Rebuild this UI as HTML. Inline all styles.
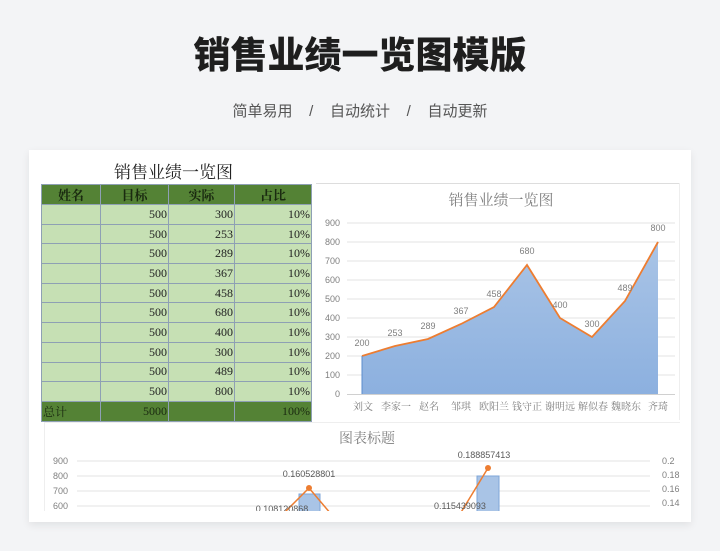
<!DOCTYPE html>
<html><head><meta charset="utf-8">
<style>
html,body{margin:0;padding:0;}
body{width:720px;height:551px;background:#f3f4f6;position:relative;overflow:hidden;font-family:"Liberation Sans","Noto Sans CJK SC",sans-serif;}
.t{position:absolute;left:0;width:720px;text-align:center;}
h1{position:absolute;top:29px;left:0;width:720px;margin:0;text-align:center;font-size:37px;font-weight:900;color:#1e1e1e;letter-spacing:0px;line-height:54px;}
.sub{top:101px;font-size:15px;color:#555;line-height:22px;}
.card{position:absolute;left:29px;top:150px;width:662px;height:372px;background:#fff;box-shadow:0 3px 8px rgba(0,0,0,0.08);overflow:hidden;}
table{position:absolute;left:12px;top:34px;border-collapse:collapse;font-family:"Liberation Serif","Noto Serif CJK SC",serif;font-size:12px;table-layout:fixed;width:270px;}
td{border:1px solid #8ea0b4;height:18.7px;padding:0 1px;background:#c6e0b4;text-align:right;color:#222;}
tr.h td{background:#548235;text-align:center;font-weight:bold;color:#1a2a10;font-size:13px;}
tr.f td{background:#548235;color:#1a2a10;}
.ttl{position:absolute;left:85px;top:8px;font-family:"Liberation Serif","Noto Serif CJK SC",serif;font-size:17px;color:#222;}
</style></head><body>
<h1>销售业绩一览图模版</h1>
<div class="t sub">简单易用&nbsp;&nbsp;&nbsp;&nbsp;/&nbsp;&nbsp;&nbsp;&nbsp;自动统计&nbsp;&nbsp;&nbsp;&nbsp;/&nbsp;&nbsp;&nbsp;&nbsp;自动更新</div>
<div class="card">
<div class="ttl">销售业绩一览图</div>
<table>
<colgroup><col style="width:59px"><col style="width:68px"><col style="width:66px"><col style="width:77px"></colgroup>
<tr class="h"><td>姓名</td><td>目标</td><td>实际</td><td>占比</td></tr>
<tr><td></td><td>500</td><td>300</td><td>10%</td></tr>
<tr><td></td><td>500</td><td>253</td><td>10%</td></tr>
<tr><td></td><td>500</td><td>289</td><td>10%</td></tr>
<tr><td></td><td>500</td><td>367</td><td>10%</td></tr>
<tr><td></td><td>500</td><td>458</td><td>10%</td></tr>
<tr><td></td><td>500</td><td>680</td><td>10%</td></tr>
<tr><td></td><td>500</td><td>400</td><td>10%</td></tr>
<tr><td></td><td>500</td><td>300</td><td>10%</td></tr>
<tr><td></td><td>500</td><td>489</td><td>10%</td></tr>
<tr><td></td><td>500</td><td>800</td><td>10%</td></tr>
<tr class="f"><td style="text-align:left">总计</td><td>5000</td><td></td><td>100%</td></tr>
</table>
<svg style="position:absolute;left:0;top:0" width="662" height="372" viewBox="29 150 662 372" font-family="Liberation Sans, Noto Sans CJK SC, sans-serif">
<defs><linearGradient id="g" x1="0" y1="0" x2="0" y2="1"><stop offset="0" stop-color="#a9c4e6"/><stop offset="1" stop-color="#8cb0df"/></linearGradient></defs>
<line x1="316" y1="183.5" x2="679" y2="183.5" stroke="#ddd"/>
<line x1="679.5" y1="183" x2="679.5" y2="420" stroke="#eee"/>
<text x="501" y="205" font-size="15" fill="#7f7f7f" text-anchor="middle" font-family="Liberation Serif, Noto Serif CJK SC, serif">销售业绩一览图</text>
<g stroke="#e3e3e3">
<line x1="347" y1="223" x2="675" y2="223"/><line x1="347" y1="242" x2="675" y2="242"/><line x1="347" y1="261" x2="675" y2="261"/><line x1="347" y1="280" x2="675" y2="280"/><line x1="347" y1="299" x2="675" y2="299"/><line x1="347" y1="318" x2="675" y2="318"/><line x1="347" y1="337" x2="675" y2="337"/><line x1="347" y1="356" x2="675" y2="356"/><line x1="347" y1="375" x2="675" y2="375"/>
</g>
<line x1="347" y1="394.5" x2="675" y2="394.5" stroke="#d0d0d0"/>
<g font-size="9" fill="#7f7f7f" text-anchor="end">
<text x="340" y="226">900</text><text x="340" y="245">800</text><text x="340" y="264">700</text><text x="340" y="283">600</text><text x="340" y="302">500</text><text x="340" y="321">400</text><text x="340" y="340">300</text><text x="340" y="359">200</text><text x="340" y="378">100</text><text x="340" y="397">0</text>
</g>
<polygon points="362,356 395,346 428,339 461,324 494,307 527,265 560,318 592,337 625,301 658,242 658,394 362,394" fill="url(#g)"/>
<polyline points="362,356 395,346 428,339 461,324 494,307 527,265 560,318 592,337 625,301 658,242" fill="none" stroke="#ed7d31" stroke-width="1.8"/>
<line x1="362" y1="356" x2="362" y2="394" stroke="#5b8ccc"/>
<g font-size="9" fill="#7f7f7f" text-anchor="middle">
<text x="362" y="346">200</text><text x="395" y="336">253</text><text x="428" y="329">289</text><text x="461" y="314">367</text><text x="494" y="297">458</text><text x="527" y="254">680</text><text x="560" y="308">400</text><text x="592" y="327">300</text><text x="625" y="291">489</text><text x="658" y="231">800</text>
</g>
<g font-size="10" fill="#7f7f7f" text-anchor="middle" font-family="Liberation Serif, Noto Serif CJK SC, serif">
<text x="363" y="410">刘文</text><text x="396" y="410">李家一</text><text x="429" y="410">赵名</text><text x="461" y="410">邹琪</text><text x="494" y="410">欧阳兰</text><text x="527" y="410">钱守正</text><text x="560" y="410">谢明远</text><text x="593" y="410">解似春</text><text x="626" y="410">魏晓东</text><text x="658" y="410">齐琦</text>
</g>
<line x1="44" y1="422.5" x2="680" y2="422.5" stroke="#eee"/>
<line x1="44.5" y1="422" x2="44.5" y2="522" stroke="#eee"/>
<text x="367" y="443" font-size="14" fill="#7f7f7f" text-anchor="middle" font-family="Liberation Serif, Noto Serif CJK SC, serif">图表标题</text>
<g stroke="#e3e3e3"><line x1="77" y1="461" x2="650" y2="461"/><line x1="77" y1="476" x2="650" y2="476"/><line x1="77" y1="491" x2="650" y2="491"/><line x1="77" y1="506" x2="650" y2="506"/></g>
<g font-size="9" fill="#7f7f7f" text-anchor="end"><text x="68" y="464">900</text><text x="68" y="479">800</text><text x="68" y="494">700</text><text x="68" y="509">600</text></g>
<g font-size="9" fill="#7f7f7f"><text x="662" y="464">0.2</text><text x="662" y="478">0.18</text><text x="662" y="492">0.16</text><text x="662" y="506">0.14</text></g>
<rect x="299" y="494" width="21" height="20" fill="#a9c4e6" stroke="#7ea6d8"/>
<rect x="477" y="476" width="22" height="38" fill="#a9c4e6" stroke="#7ea6d8"/>
<polyline points="283,514 309,488 331,514" fill="none" stroke="#ed7d31" stroke-width="1.5"/>
<polyline points="460,514 488,468" fill="none" stroke="#ed7d31" stroke-width="1.5"/>
<circle cx="309" cy="488" r="3" fill="#ed7d31"/><circle cx="488" cy="468" r="3" fill="#ed7d31"/>
<g font-size="9" fill="#595959" text-anchor="middle"><text x="309" y="477">0.160528801</text><text x="484" y="458">0.188857413</text><text x="282" y="512">0.108120868</text><text x="460" y="509">0.115439093</text></g>
<rect x="29" y="511" width="662" height="11" fill="#fff"/>
</svg>
</div>
</body></html>
